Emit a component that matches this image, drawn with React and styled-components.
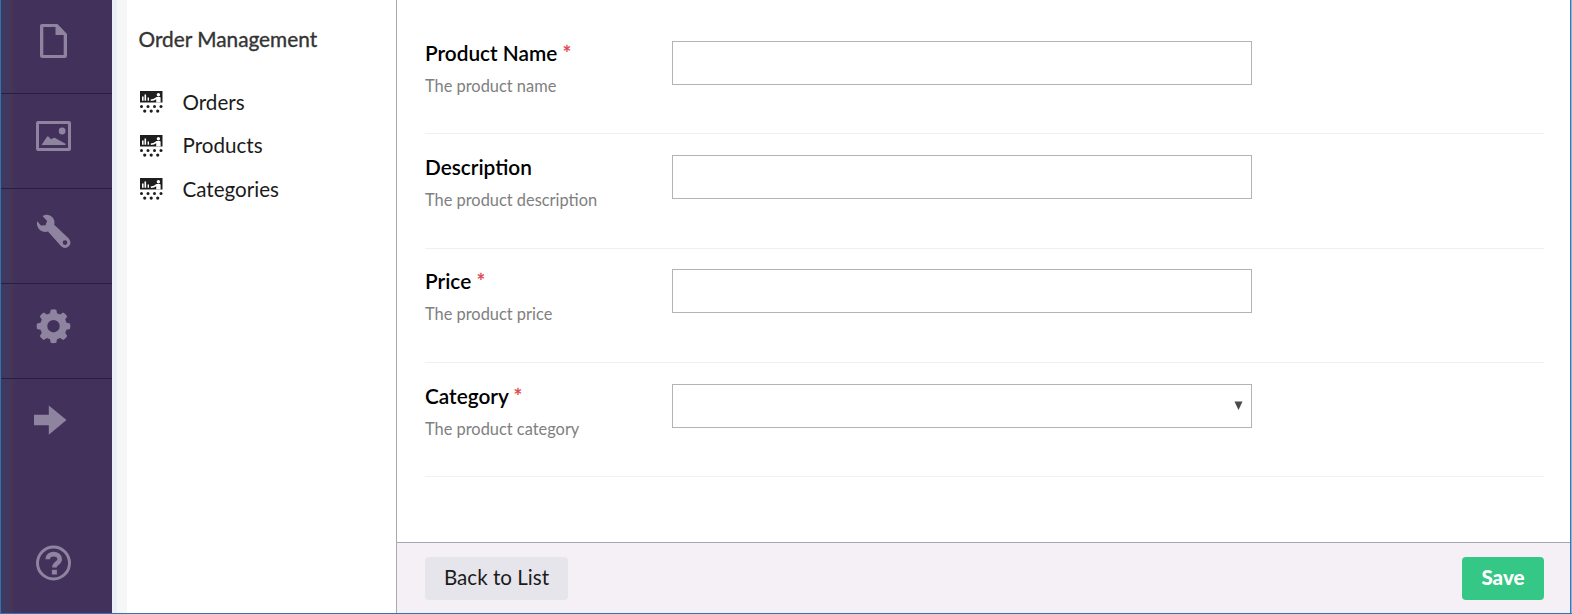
import React from "react";
import styled, { createGlobalStyle } from "styled-components";

const GlobalStyle = createGlobalStyle`
  * { box-sizing: border-box; }
  body { margin: 0; background: #fff; font-family: Lato, "Open Sans", sans-serif; }
`;

const Window = styled.div`
  display: flex;
  width: 1572px;
  height: 614px;
  overflow: hidden;
  background: #fff;
  border-left: 1px solid #2f74b5;
  border-bottom: 1px solid #2f74b5;
`;

const Rail = styled.nav`
  display: flex;
  flex-direction: column;
  width: 111px;
  flex: none;
  color: #8f84a0;
  background: linear-gradient(90deg, #41385f 0, #41385f 9px, #483555 9px, #483555 12px, #42315b 13px);
`;

const RailItem = styled.a`
  display: flex;
  flex: none;
  height: ${(p) => p.$height}px;
  padding: ${(p) => p.$top}px 0 0 33px;
  border-bottom: ${(p) => (p.$last ? "0" : "1px solid #291e40")};
`;

const RailSpacer = styled.div`
  flex: 1;
`;

const RailIcon = styled.svg`
  display: block;
  width: 38px;
  height: 38px;
  fill: currentColor;
`;

const Gutter = styled.div`
  width: 15px;
  flex: none;
  border-left: 5px solid #ededf8;
  background: #f6f6f6;
`;

const Sidebar = styled.aside`
  width: 269px;
  flex: none;
  padding: 26px 0 0 11.5px;
`;

const SidebarTitle = styled.h2`
  margin: 0 0 37px;
  font-size: 20.8px;
  line-height: 26px;
  font-weight: 400;
  -webkit-text-stroke: 0.35px #343434;
  color: #343434;
`;

const MenuItem = styled.a`
  display: flex;
  align-items: center;
  height: 43.5px;
  margin-top: ${(p) => (p.$first ? "-9px" : "0")};
  font-size: 20.6px;
  color: #1b1b1b;
`;

const MenuIcon = styled.svg`
  width: 24px;
  height: 24px;
  margin: 1px 20px 0 0;
  fill: #1e1e1e;
`;

const Main = styled.main`
  display: flex;
  flex-direction: column;
  flex: 1;
  border-left: 1px solid #aaa9ad;
`;

const Form = styled.form`
  flex: 1;
  padding: 0 26px 0 28px;
`;

const Row = styled.div`
  display: flex;
  height: ${(p) => p.$height}px;
  padding-top: ${(p) => p.$top}px;
  border-bottom: 1px solid #f0f0f0;
`;

const LabelColumn = styled.div`
  width: 247px;
  flex: none;
`;

const Label = styled.label`
  display: block;
  margin-top: -1px;
  font-size: 20.8px;
  line-height: 26px;
  font-weight: 600;
  color: #000;
`;

const Required = styled.span`
  color: #e0454b;
  font-weight: 400;
  -webkit-text-stroke: 0.3px #e0454b;
`;

const Hint = styled.div`
  margin-top: 9px;
  font-size: 16.4px;
  line-height: 22px;
  color: #808080;
`;

const Field = styled.div`
  display: flex;
  align-items: center;
  justify-content: flex-end;
  width: 580px;
  height: 44px;
  padding-right: 8px;
  border: 1px solid #b3b3b3;
  background: #fff;
`;

const Caret = styled.svg`
  width: 9px;
  height: 9px;
  margin-bottom: 2px;
  fill: #4a4a4a;
`;

const Footer = styled.footer`
  display: flex;
  justify-content: space-between;
  align-items: flex-start;
  height: 71px;
  padding: 14px 26px 0 28px;
  border-top: 1px solid #aaa2b5;
  background: #f5f0f6;
`;

const Button = styled.button`
  width: ${(p) => p.$width}px;
  height: 43px;
  padding: 0 0 2px;
  border: 0;
  border-radius: 4px;
  font-family: inherit;
  font-size: 20.6px;
  line-height: 41px;
  font-weight: ${(p) => (p.$primary ? 900 : 400)};
  color: ${(p) => (p.$primary ? "#fff" : "#1b1b1b")};
  background: ${(p) => (p.$primary ? "#35c786" : "#e6e5ec")};
`;

const WindowEdge = styled.div`
  width: 2px;
  flex: none;
  background: #7db8e8;
  border-left: 1px solid #3a78ae;
`;

const BoardIcon = () => (
  <MenuIcon viewBox="0 0 24 24">
    <path d="M1 1h22.500v11.500H1z" />
    <g fill="#fff">
      <path d="M3 6.500h1.600v4.200H3zM5.500 4.500h1.600v6.200H5.500zM8.600 7.600h1.400v3.100H8.600z" />
      <path d="M11.600 9.600l3.200-.8 2.700-1.900h3.300q.8.200.8 1v4.600h-4.400V9.300l-2.200 1.300-3.100.4z" />
      <circle cx="19.400" cy="4.700" r="1.700" />
    </g>
    {[2.5, 9, 15.500, 22].map((x) => <circle key={x} cx={x} cy="16.600" r="1.500" />)}
    {[5.700, 12.200, 18.700].map((x) => <circle key={x} cx={x} cy="21.100" r="1.600" />)}
  </MenuIcon>
);

const sections = [
  {
    height: 94, top: 22,
    shape: <path fillRule="evenodd" d="M8 2h15.500L33 12v21.500a2.500 2.500 0 0 1-2.500 2.500H8.500A2.500 2.500 0 0 1 6 33.500V4a2 2 0 0 1 2-2zm1.300 3v28h20.400V13H21.500V5z" />,
  },
  {
    height: 95, top: 23,
    shape: (
      <>
        <path fillRule="evenodd" d="M4 4h31a2 2 0 0 1 2 2v26a2 2 0 0 1-2 2H4a2 2 0 0 1-2-2V6a2 2 0 0 1 2-2zm1 3v24h29V7z" />
        <path d="M7.500 28l5.500-8.300q.8-1 1.600 0l2.400 2.500 2.500-1.200q.8-.3 1.500 0l10.500 5.800V28zM28.200 10.600a3.400 3.400 0 1 1-.1 6.800 3.400 3.400 0 0 1 .1-6.800z" />
      </>
    ),
  },
  {
    height: 95, top: 24,
    shape: <path fillRule="evenodd" d="M8.500 3Q14.500-.2 18.500 4.200q2.800 3.500 1.700 7.600L34.500 25.300q3.700 3.900.6 7.800-4 3.700-8.200 0L14 18.500q-4.300 1.200-7.800-1.200Q2 13.700 3.200 8.300L7 12.500l4.500-.3 1.600-4.200zM31 27.300a2.300 2.300 0 1 0 0 4.600 2.300 2.300 0 0 0 0-4.600z" />,
  },
  {
    height: 95, top: 23,
    shape: <path fillRule="evenodd" d="M16 6.200l.7-3.500Q19.500 1.800 22.300 2.700L23 6.200l3.100 1.300 3.100-2q2.800 1.300 4 4l-2 3.100L32.500 15.700l3.500.7q.9 2.800 0 5.600l-3.500.7-1.300 3.100 2 3.100q-1.200 2.700-4 4l-3.100-2L23 32.200l-.7 3.500q-2.800.9-5.600 0L16 32.200l-3.100-1.300-3.100 2q-2.800-1.300-4-4l2-3.100-1.300-3.100L3 22q-.9-2.800 0-5.600l3.500-.7 1.300-3.100-2-3.100q1.200-2.700 4-4l3.100 2zM19.500 13a6.200 6.200 0 1 0 0 12.400 6.200 6.200 0 0 0 0-12.400z" />,
  },
  {
    height: 95, top: 23, last: true,
    shape: <path d="M0 12.800h14.800V3.500L32.500 18 14.800 32.800V23.300H0z" />,
  },
];

const fields = [
  { label: "Product Name", hint: "The product name", required: true, height: 134, top: 41 },
  { label: "Description", hint: "The product description", height: 115, top: 21 },
  { label: "Price", hint: "The product price", required: true, height: 114, top: 20 },
  { label: "Category", hint: "The product category", required: true, select: true, height: 114, top: 21 },
];

export default function App() {
  return (
    <>
      <GlobalStyle />
      <Window>
        <Rail>
          {sections.map((s, i) => (
            <RailItem key={i} $height={s.height} $top={s.top} $last={s.last}>
              <RailIcon viewBox="0 0 38 38">{s.shape}</RailIcon>
            </RailItem>
          ))}
          <RailSpacer />
          <RailItem $height={70} $top={0} $last>
            <RailIcon viewBox="0 0 38 38">
              <circle cx="19.500" cy="20" r="16" fill="none" stroke="currentColor" strokeWidth="3" />
              <path d="M13.700 16.200c0-6.800 12-6.800 12 0 0 4.200-5.300 3.600-5.300 8.300" fill="none" stroke="currentColor" strokeWidth="4.600" />
              <path d="M17.900 26.800h5v4.700h-5z" />
            </RailIcon>
          </RailItem>
        </Rail>
        <Gutter />
        <Sidebar>
          <SidebarTitle>Order Management</SidebarTitle>
          {["Orders", "Products", "Categories"].map((name, i) => (
            <MenuItem key={name} $first={i === 0}>
              <BoardIcon />
              {name}
            </MenuItem>
          ))}
        </Sidebar>
        <Main>
          <Form>
            {fields.map((f) => (
              <Row key={f.label} $height={f.height} $top={f.top}>
                <LabelColumn>
                  <Label>
                    {f.label} {f.required && <Required>*</Required>}
                  </Label>
                  <Hint>{f.hint}</Hint>
                </LabelColumn>
                <Field>
                  {f.select && (
                    <Caret viewBox="0 0 9 9">
                      <path d="M.5 .5h8L4.500 9z" />
                    </Caret>
                  )}
                </Field>
              </Row>
            ))}
          </Form>
          <Footer>
            <Button type="button" $width={143}>Back to List</Button>
            <Button type="button" $width={82} $primary>Save</Button>
          </Footer>
        </Main>
        <WindowEdge />
      </Window>
    </>
  );
}
